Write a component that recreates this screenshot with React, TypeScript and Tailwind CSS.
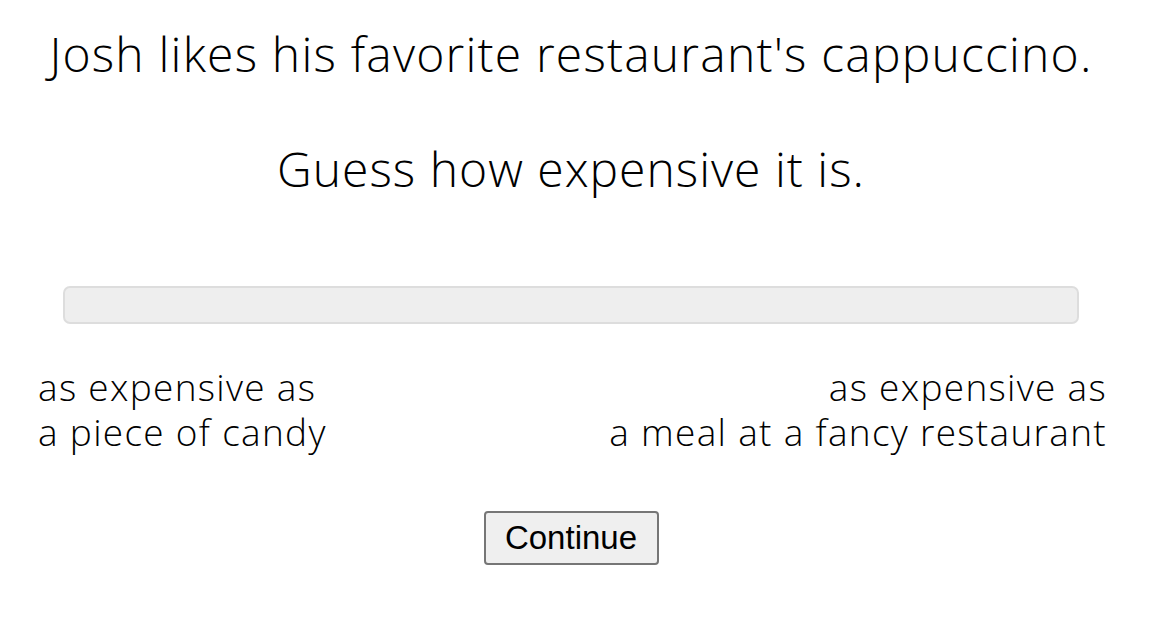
export default function App() {
  return (
    <div className="min-h-screen bg-white text-black" style={{ fontFamily: '"Open Sans", "Noto Sans", sans-serif' }}>
      <div className="w-[1142px]">
        <div className="flex flex-col items-center pt-[22px]">
          <p className="text-[48px] font-light leading-[64px] tracking-[1.2px]">Josh likes his favorite restaurant's cappuccino.</p>
          <p className="mt-[51px] text-[48px] font-light leading-[64px] tracking-[1px]">Guess how expensive it is.</p>
        </div>
        <div className="mt-[85px] px-[63px]">
          <div className="h-[38px] w-full rounded-[7px] border-2 border-[#dddddd] bg-[#eeeeee]" />
        </div>
        <div className="mt-[40px] flex justify-between pl-[38px] pr-[35px] text-[37px] font-light leading-[45px] tracking-[1.3px]">
          <div>
            <p>as expensive as</p>
            <p>a piece of candy</p>
          </div>
          <div className="text-right">
            <p>as expensive as</p>
            <p>a meal at a fancy restaurant</p>
          </div>
        </div>
        <div className="mt-[57px] flex justify-center">
          <button
            className="h-[54px] w-[175px] rounded-[4px] border-2 border-[#767676] bg-[#efefef] text-[33px] text-black"
            style={{ fontFamily: '"Liberation Sans", Arial, sans-serif' }}
          >
            Continue
          </button>
        </div>
      </div>
    </div>
  )
}
